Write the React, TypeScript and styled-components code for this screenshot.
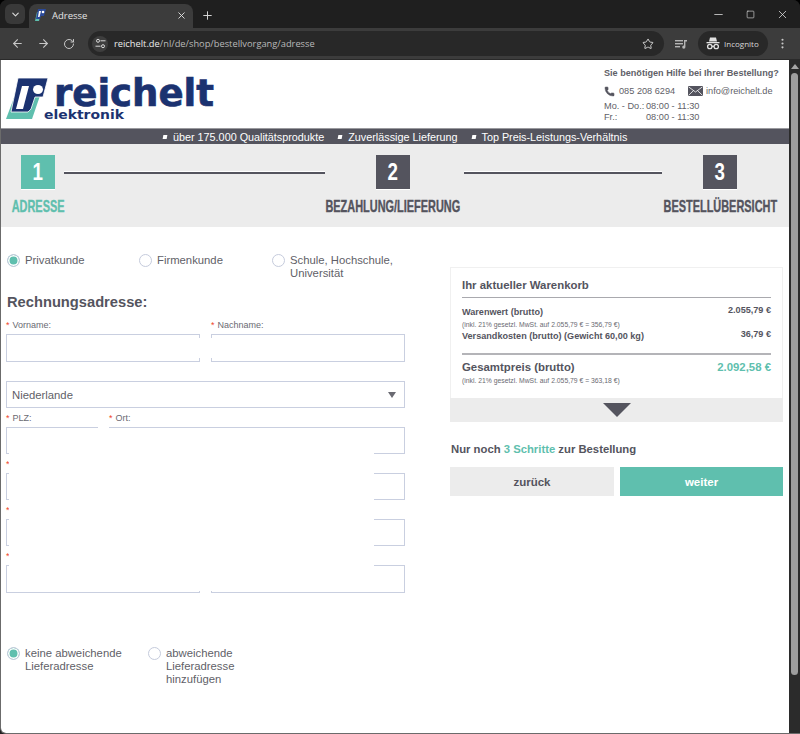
import React from 'react';
import styled, { createGlobalStyle } from 'styled-components';
import {
  ArrowLeft, ArrowRight, ChevronDown, Minus, MoreVertical, Phone, Plus, RotateCw, Square, Star, X,
} from 'lucide-react';

const GlobalStyle = createGlobalStyle`
  html, body {
    margin: 0;
    padding: 0;
    background: #000;
  }
  * {
    box-sizing: border-box;
  }
`;

const Page = styled.div`
  width: 800px;
  height: 734px;
  overflow: hidden;
  display: flex;
  flex-direction: column;
  background: #202020;
  font-family: "Liberation Sans", Arial, sans-serif;
  border-radius: 7px 7px 0 0;
`;

const TabStrip = styled.div`
  height: 28px;
  display: flex;
  align-items: flex-end;
  padding-left: 5px;
  color: #d8d8d8;
  background: #1f1f1f;
`;

const TabSearch = styled.div`
  width: 20px;
  height: 20px;
  margin: 0 4px 4px 0;
  border-radius: 6px;
  background: #393939;
  display: flex;
  align-items: center;
  justify-content: center;
`;

const Tab = styled.div`
  width: 164px;
  height: 24px;
  background: #3c3c3c;
  border-radius: 8px 8px 0 0;
  display: flex;
  align-items: center;
  padding: 0 6px 2px;
  font-family: "Open Sans", sans-serif;
  font-size: 9.5px;
  color: #e4e4e4;
`;

const TabTitle = styled.span`
  margin-left: 6px;
  flex: 1;
`;

const NewTab = styled.div`
  width: 28px;
  height: 24px;
  padding-bottom: 2px;
  display: flex;
  align-items: center;
  justify-content: center;
`;

const WindowControls = styled.div`
  margin-left: auto;
  height: 28px;
  display: flex;
  align-items: center;
  padding-right: 2px;
  color: #e6e6e6;
`;

const WindowButton = styled.div`
  width: 32px;
  display: flex;
  justify-content: center;
`;

const Toolbar = styled.div`
  height: 32px;
  background: #3c3c3c;
  display: flex;
  align-items: center;
  padding-left: 4px;
  color: #c7c7c7;
  border-bottom: 1px solid #2a2a2a;
`;

const NavButton = styled.div`
  width: 26px;
  display: flex;
  justify-content: center;
`;

const Omnibox = styled.div`
  width: 576px;
  height: 25px;
  margin-left: 6px;
  border-radius: 13px;
  background: #282828;
  display: flex;
  align-items: center;
  padding: 0 10px 0 4px;
  font-family: "Open Sans", sans-serif;
  font-size: 9.3px;
  color: #b9b9b9;
`;

const TuneButton = styled.div`
  width: 16px;
  height: 16px;
  border-radius: 50%;
  background: #3e3e3e;
  margin-right: 6px;
  display: flex;
  align-items: center;
  justify-content: center;
`;

const Domain = styled.span`
  color: #ececec;
`;

const StarWrap = styled.div`
  margin-left: auto;
  display: flex;
`;

const MediaButton = styled.div`
  width: 34px;
  display: flex;
  justify-content: center;
`;

const IncognitoPill = styled.div`
  width: 70px;
  height: 25px;
  border-radius: 13px;
  background: #282828;
  display: flex;
  align-items: center;
  gap: 4px;
  padding-left: 8px;
  font-family: "Open Sans", sans-serif;
  font-size: 8px;
  color: #d8d8d8;
`;

const MenuButton = styled.div`
  margin-left: 8px;
  display: flex;
`;

const Viewport = styled.div`
  flex: 1;
  display: flex;
  min-height: 0;
  border-left: 1px solid #6b6b6b;
  border-bottom: 1px solid #6b6b6b;
  border-radius: 0 0 0 6px;
  overflow: hidden;
`;

const Content = styled.div`
  width: 788px;
  background: #fff;
  color: #54545e;
  overflow: hidden;
`;

const ScrollTrack = styled.div`
  flex: 1;
  background: #2b2b2b;
  display: flex;
  flex-direction: column;
  align-items: center;
  padding-top: 4px;
`;

const ScrollArrow = styled.div`
  width: 0;
  height: 0;
  border-left: 4px solid transparent;
  border-right: 4px solid transparent;
  border-bottom: 5px solid #a6a6a6;
`;

const ScrollThumb = styled.div`
  width: 7px;
  height: 602px;
  margin-top: 4px;
  border-radius: 4px;
  background: #9e9e9e;
`;

const Header = styled.header`
  height: 69px;
  display: flex;
  justify-content: space-between;
  border-bottom: 1px solid #9a9a9e;
`;

const Help = styled.div`
  width: 185px;
  padding-top: 8px;
  font-size: 9.2px;
  color: #5f5f68;
`;

const HelpTitle = styled.div`
  font-size: 9.1px;
  font-weight: 700;
  line-height: 11px;
  white-space: nowrap;
`;

const ContactRow = styled.div`
  display: flex;
  align-items: center;
  margin-top: 5px;
  height: 14px;
`;

const Contact = styled.span<{ $width: number; $gap: number }>`
  display: flex;
  align-items: center;
  gap: ${(p) => p.$gap}px;
  width: ${(p) => p.$width}px;
  white-space: nowrap;
`;

const Hours = styled.div`
  display: grid;
  grid-template-columns: 42px auto;
  margin-top: 3px;
  line-height: 11px;
  white-space: nowrap;
`;

const UspBar = styled.div`
  height: 15px;
  background: #54545e;
  color: #fff;
  display: flex;
  align-items: center;
  padding-left: 162px;
  gap: 14px;
  font-size: 10.8px;
  white-space: nowrap;
`;

const Usp = styled.span`
  display: flex;
  align-items: center;
  gap: 6px;

  &::before {
    content: "";
    width: 4px;
    height: 4px;
    background: #fff;
    transform: skewX(-10deg);
  }
`;

const Steps = styled.div`
  height: 83px;
  background: #ececec;
  display: flex;
  padding: 11px 0 0 11px;
`;

const Step = styled.div<{ $width: number }>`
  flex: none;
  width: ${(p) => p.$width}px;
  display: flex;
  flex-direction: column;
  align-items: center;
`;

const StepNumber = styled.div<{ $active?: boolean }>`
  width: 34px;
  height: 35px;
  background: ${(p) => (p.$active ? '#5fbfae' : '#54545e')};
  color: #fff;
  border-bottom: 1px solid #fff;
  display: flex;
  align-items: center;
  justify-content: center;
  font-size: 24px;
  font-weight: 700;
`;

const Digit = styled.span`
  display: inline-block;
  transform: scaleX(0.78);
`;

const StepLabel = styled.div<{ $active?: boolean }>`
  margin-top: 8px;
  color: ${(p) => (p.$active ? '#5fbfae' : '#54545e')};
  font-size: 17px;
  line-height: 18px;
  font-weight: 700;
  white-space: nowrap;
  transform: scaleX(0.643);
  -webkit-text-stroke: 0.4px currentColor;
`;

const StepLine = styled.div<{ $width: number; $left: number; $right: number }>`
  flex: none;
  width: ${(p) => p.$width}px;
  height: 2px;
  margin: 17px ${(p) => p.$right}px 0 ${(p) => p.$left}px;
  background: #54545e;
  box-shadow: 0 -1px 0 #fff;
`;

const Main = styled.main`
  display: flex;
  align-items: flex-start;
`;

const FormColumn = styled.div`
  position: relative;
  width: 449px;
  padding: 27px 45px 0 5px;
`;

const RadioRow = styled.div<{ $top?: number }>`
  display: flex;
  margin: ${(p) => p.$top || 0}px 0 0 1px;
`;

const RadioItem = styled.label<{ $width: number }>`
  width: ${(p) => p.$width}px;
  display: flex;
  gap: 5px;
  font-size: 11.3px;
  line-height: 13px;
  color: #5f5f68;
`;

const RadioDot = styled.span<{ $checked?: boolean }>`
  flex: none;
  width: 13px;
  height: 13px;
  border-radius: 50%;
  border: 1px solid #c5cbdc;
  background: ${(p) => (p.$checked ? '#5fbfae' : '#fff')};
  box-shadow: ${(p) => (p.$checked ? 'inset 0 0 0 1.5px #fff' : 'none')};
`;

const Heading = styled.h2`
  margin: 13px 0 4px 1px;
  font-size: 14.7px;
  line-height: 18px;
  font-weight: 700;
  color: #54545e;
`;

const FieldRow = styled.div`
  display: flex;
  gap: 11px;
`;

const Field = styled.div<{ $width?: number }>`
  ${(p) => (p.$width ? `width: ${p.$width}px;` : 'flex: 1;')}
`;

const FieldLabel = styled.div`
  height: 13px;
  margin-top: 4px;
  font-size: 9px;
  line-height: 13px;
  color: #6a6a72;
  white-space: nowrap;
`;

const Required = styled.span`
  color: #f0432c;
  margin-right: 3px;
`;

const Input = styled.div<{ $height: number; $open?: 'left' | 'right' }>`
  position: relative;
  height: ${(p) => p.$height}px;
  margin-top: 2px;
  border: 1px solid #c9cfe0;
  background: #fff;

  &::after {
    ${(p) => (p.$open ? `content: ""; ${p.$open}: -1px;` : '')}
    position: absolute;
    top: 3px;
    bottom: 3px;
    width: 1px;
    background: #fff;
  }
`;

const Select = styled.div`
  height: 27px;
  margin-top: 19px;
  border: 1px solid #c9cfe0;
  display: flex;
  align-items: center;
  justify-content: space-between;
  padding: 0 8px 0 5px;
  font-size: 11.3px;
  color: #5f5f68;

  &::after {
    content: "";
    border-left: 4px solid transparent;
    border-right: 4px solid transparent;
    border-top: 6px solid #6a6a72;
  }
`;

const Cover = styled.div`
  position: absolute;
  left: 8px;
  top: 201px;
  width: 365px;
  height: 163px;
  background: #fff;
`;

const CartColumn = styled.div`
  width: 333px;
  margin-top: 40px;
  color: #54545e;
`;

const Cart = styled.section`
  border: 1px solid #f0f0f0;
  border-bottom: 0;
  padding: 11px 11px 13px 11px;
`;

const CartTitle = styled.h3`
  margin: 0;
  padding-bottom: 5px;
  border-bottom: 1px solid #a9a9ae;
  font-size: 11.4px;
  line-height: 13px;
  font-weight: 700;
`;

const PriceRow = styled.div<{ $top: number }>`
  display: flex;
  justify-content: space-between;
  margin-top: ${(p) => p.$top}px;
  font-size: 9.1px;
  font-weight: 700;
  line-height: 12px;
`;

const Price = styled.span`
  margin-top: -2px;
`;

const TotalDivider = styled.div`
  height: 2px;
  margin-top: 11px;
  background: #b4b4b8;
`;

const TotalRow = styled.div`
  display: flex;
  justify-content: space-between;
  margin-top: 5px;
  font-size: 11.4px;
  font-weight: 700;
  line-height: 14px;
`;

const TotalPrice = styled.span`
  color: #5fbfae;
`;

const Note = styled.div`
  margin-top: 2px;
  font-size: 6.8px;
  line-height: 9px;
  color: #6a6a72;
  white-space: nowrap;
`;

const ExpandBar = styled.div`
  height: 24px;
  background: #ececec;
  display: flex;
  justify-content: center;
  padding-top: 5px;

  &::after {
    content: "";
    height: 0;
    border-left: 14px solid transparent;
    border-right: 14px solid transparent;
    border-top: 14px solid #54545e;
  }
`;

const StepsLeft = styled.p`
  margin: 20px 0 0 1px;
  font-size: 11.3px;
  line-height: 14px;
  font-weight: 700;
`;

const Accent = styled.span`
  color: #5fbfae;
`;

const Buttons = styled.div`
  display: flex;
  gap: 6px;
  margin-top: 11px;
`;

const ActionButton = styled.button<{ $primary?: boolean }>`
  width: ${(p) => (p.$primary ? 163 : 164)}px;
  height: 29px;
  border: 0;
  padding: 0;
  background: ${(p) => (p.$primary ? '#5fbfae' : '#ececec')};
  color: ${(p) => (p.$primary ? '#fff' : '#54545e')};
  font-family: inherit;
  font-size: 11.5px;
  font-weight: 700;
`;

function Logo() {
  return (
    <svg width="220" height="68" viewBox="0 61 220 68">
      <polygon points="17,88 42,88 31,120 5,120" fill="#5fbfae" />
      <polygon points="17,79 47,79 42,98 34,98 30,110 27,113 10,113" fill="#1b3270" stroke="#fff" strokeWidth="0.8" />
      <polygon points="21,87 28,87 22,110 15,110" fill="#fff" />
      <ellipse cx="37" cy="90.5" rx="5" ry="4.5" fill="#fff" />
      <text x="53" y="107" fontFamily="DejaVu Sans" fontWeight="700" fontSize="37" fill="#1b3270" stroke="#1b3270" strokeWidth="0.7" textLength="160" lengthAdjust="spacingAndGlyphs">reichelt</text>
      <text x="43" y="120" fontFamily="DejaVu Sans" fontWeight="700" fontSize="13" fill="#1b3270" textLength="80" lengthAdjust="spacingAndGlyphs">elektronik</text>
    </svg>
  );
}

function Favicon() {
  return (
    <svg width="11" height="12" viewBox="0 0 11 12">
      <polygon points="2,3 6,3 4,12 0,12" fill="#5fbfae" />
      <polygon points="3,0 11,0 9,7 6,7 5,10 1,10" fill="#2b4a9a" />
      <polygon points="4,2 6,2 4.5,8 3,8" fill="#fff" />
      <circle cx="8" cy="3" r="1.3" fill="#fff" />
    </svg>
  );
}

function TuneIcon() {
  return (
    <svg width="11" height="11" viewBox="0 0 11 11" fill="none" stroke="#d8d8d8" strokeWidth="1">
      <circle cx="3" cy="2.8" r="1.5" />
      <path d="M5.5 2.8H10.5M0.5 8.2H5.5" />
      <circle cx="8" cy="8.2" r="1.5" />
    </svg>
  );
}

function MediaIcon() {
  return (
    <svg width="12" height="10" viewBox="0 0 12 10" fill="#b5b5b5">
      <rect x="0" y="1" width="8" height="1.4" />
      <rect x="0" y="4" width="8" height="1.4" />
      <rect x="0" y="7" width="5" height="1.4" />
      <path d="M9 1h3v1.4h-1.6V8a1.6 1.6 0 1 1-1.4-1.5z" />
    </svg>
  );
}

function IncognitoIcon() {
  return (
    <svg width="14" height="13" viewBox="0 0 14 13" fill="#e0e0e0">
      <path d="M4 0.5h6l1 4H3z" />
      <rect x="0.5" y="5" width="13" height="1.3" />
      <circle cx="3.8" cy="9.5" r="2.2" fill="none" stroke="#e0e0e0" strokeWidth="1.3" />
      <circle cx="10.2" cy="9.5" r="2.2" fill="none" stroke="#e0e0e0" strokeWidth="1.3" />
      <rect x="5.8" y="8.8" width="2.4" height="1.1" />
    </svg>
  );
}

function EnvelopeIcon() {
  return (
    <svg width="15" height="10" viewBox="0 0 15 10">
      <rect width="15" height="10" fill="#54545e" />
      <path d="M0.5 0.8L7.5 6L14.5 0.8M0.5 9.4L5.5 4.6M14.5 9.4L9.5 4.6" fill="none" stroke="#fff" strokeWidth="0.8" />
    </svg>
  );
}

const note1 = '(inkl. 21% gesetzl. MwSt. auf 2.055,79 € = 356,79 €)';
const note2 = '(inkl. 21% gesetzl. MwSt. auf 2.055,79 € = 363,18 €)';

export default function App() {
  return (
    <Page>
      <GlobalStyle />
      <TabStrip>
        <TabSearch><ChevronDown size={11} strokeWidth={2.5} /></TabSearch>
        <Tab>
          <Favicon />
          <TabTitle>Adresse</TabTitle>
          <X size={11} strokeWidth={2} />
        </Tab>
        <NewTab><Plus size={13} strokeWidth={1.8} /></NewTab>
        <WindowControls>
          <WindowButton><Minus size={13} strokeWidth={1.4} /></WindowButton>
          <WindowButton><Square size={9} strokeWidth={1.6} /></WindowButton>
          <WindowButton><X size={13} strokeWidth={1.4} /></WindowButton>
        </WindowControls>
      </TabStrip>
      <Toolbar>
        <NavButton><ArrowLeft size={13} /></NavButton>
        <NavButton><ArrowRight size={13} /></NavButton>
        <NavButton><RotateCw size={12} /></NavButton>
        <Omnibox>
          <TuneButton><TuneIcon /></TuneButton>
          <Domain>reichelt.de</Domain>
          /nl/de/shop/bestellvorgang/adresse
          <StarWrap><Star size={12} color="#e0e0e0" strokeWidth={1.8} /></StarWrap>
        </Omnibox>
        <MediaButton><MediaIcon /></MediaButton>
        <IncognitoPill>
          <IncognitoIcon />
          Incognito
        </IncognitoPill>
        <MenuButton><MoreVertical size={13} strokeWidth={2} /></MenuButton>
      </Toolbar>
      <Viewport>
        <Content>
          <Header>
            <Logo />
            <Help>
              <HelpTitle>Sie benötigen Hilfe bei Ihrer Bestellung?</HelpTitle>
              <ContactRow>
                <Contact $width={84} $gap={4}>
                  <Phone size={11} fill="#54545e" strokeWidth={1} />
                  085 208 6294
                </Contact>
                <Contact $width={90} $gap={3}>
                  <EnvelopeIcon />
                  info@reichelt.de
                </Contact>
              </ContactRow>
              <Hours>
                <span>Mo. - Do.:</span>
                <span>08:00 - 11:30</span>
                <span>Fr.:</span>
                <span>08:00 - 11:30</span>
              </Hours>
            </Help>
          </Header>
          <UspBar>
            <Usp>über 175.000 Qualitätsprodukte</Usp>
            <Usp>Zuverlässige Lieferung</Usp>
            <Usp>Top Preis-Leistungs-Verhältnis</Usp>
          </UspBar>
          <Steps>
            <Step $width={52}>
              <StepNumber $active><Digit>1</Digit></StepNumber>
              <StepLabel $active>ADRESSE</StepLabel>
            </Step>
            <StepLine $width={261} $left={0} $right={0} />
            <Step $width={135}>
              <StepNumber><Digit>2</Digit></StepNumber>
              <StepLabel>BEZAHLUNG/LIEFERUNG</StepLabel>
            </Step>
            <StepLine $width={198} $left={4} $right={1} />
            <Step $width={114}>
              <StepNumber><Digit>3</Digit></StepNumber>
              <StepLabel>BESTELLÜBERSICHT</StepLabel>
            </Step>
          </Steps>
          <Main>
            <FormColumn>
              <RadioRow>
                <RadioItem $width={132}><RadioDot $checked />Privatkunde</RadioItem>
                <RadioItem $width={133}><RadioDot />Firmenkunde</RadioItem>
                <RadioItem $width={127}><RadioDot />Schule, Hochschule, Universität</RadioItem>
              </RadioRow>
              <Heading>Rechnungsadresse:</Heading>
              <FieldRow>
                <Field>
                  <FieldLabel><Required>*</Required>Vorname:</FieldLabel>
                  <Input $height={28} $open="right" />
                </Field>
                <Field>
                  <FieldLabel><Required>*</Required>Nachname:</FieldLabel>
                  <Input $height={28} $open="left" />
                </Field>
              </FieldRow>
              <Select>Niederlande</Select>
              <FieldRow>
                <Field $width={92}>
                  <FieldLabel><Required>*</Required>PLZ:</FieldLabel>
                  <Input $height={27} $open="right" />
                </Field>
                <Field>
                  <FieldLabel><Required>*</Required>Ort:</FieldLabel>
                  <Input $height={27} $open="left" />
                </Field>
              </FieldRow>
              <FieldLabel><Required>*</Required></FieldLabel>
              <Input $height={27} />
              <FieldLabel><Required>*</Required></FieldLabel>
              <Input $height={27} />
              <FieldRow>
                <Field>
                  <FieldLabel><Required>*</Required></FieldLabel>
                  <Input $height={28} $open="right" />
                </Field>
                <Field>
                  <FieldLabel />
                  <Input $height={28} $open="left" />
                </Field>
              </FieldRow>
              <RadioRow $top={54}>
                <RadioItem $width={141}><RadioDot $checked />keine abweichende Lieferadresse</RadioItem>
                <RadioItem $width={100}><RadioDot />abweichende Lieferadresse hinzufügen</RadioItem>
              </RadioRow>
              <Cover />
            </FormColumn>
            <CartColumn>
              <Cart>
                <CartTitle>Ihr aktueller Warenkorb</CartTitle>
                <PriceRow $top={8}>
                  <span>Warenwert (brutto)</span>
                  <Price>2.055,79 €</Price>
                </PriceRow>
                <Note>{note1}</Note>
                <PriceRow $top={1}>
                  <span>Versandkosten (brutto) (Gewicht 60,00 kg)</span>
                  <Price>36,79 €</Price>
                </PriceRow>
                <TotalDivider />
                <TotalRow>
                  <span>Gesamtpreis (brutto)</span>
                  <TotalPrice>2.092,58 €</TotalPrice>
                </TotalRow>
                <Note>{note2}</Note>
              </Cart>
              <ExpandBar />
              <StepsLeft>
                Nur noch <Accent>3 Schritte</Accent> zur Bestellung
              </StepsLeft>
              <Buttons>
                <ActionButton type="button">zurück</ActionButton>
                <ActionButton type="button" $primary>weiter</ActionButton>
              </Buttons>
            </CartColumn>
          </Main>
        </Content>
        <ScrollTrack>
          <ScrollArrow />
          <ScrollThumb />
        </ScrollTrack>
      </Viewport>
    </Page>
  );
}
